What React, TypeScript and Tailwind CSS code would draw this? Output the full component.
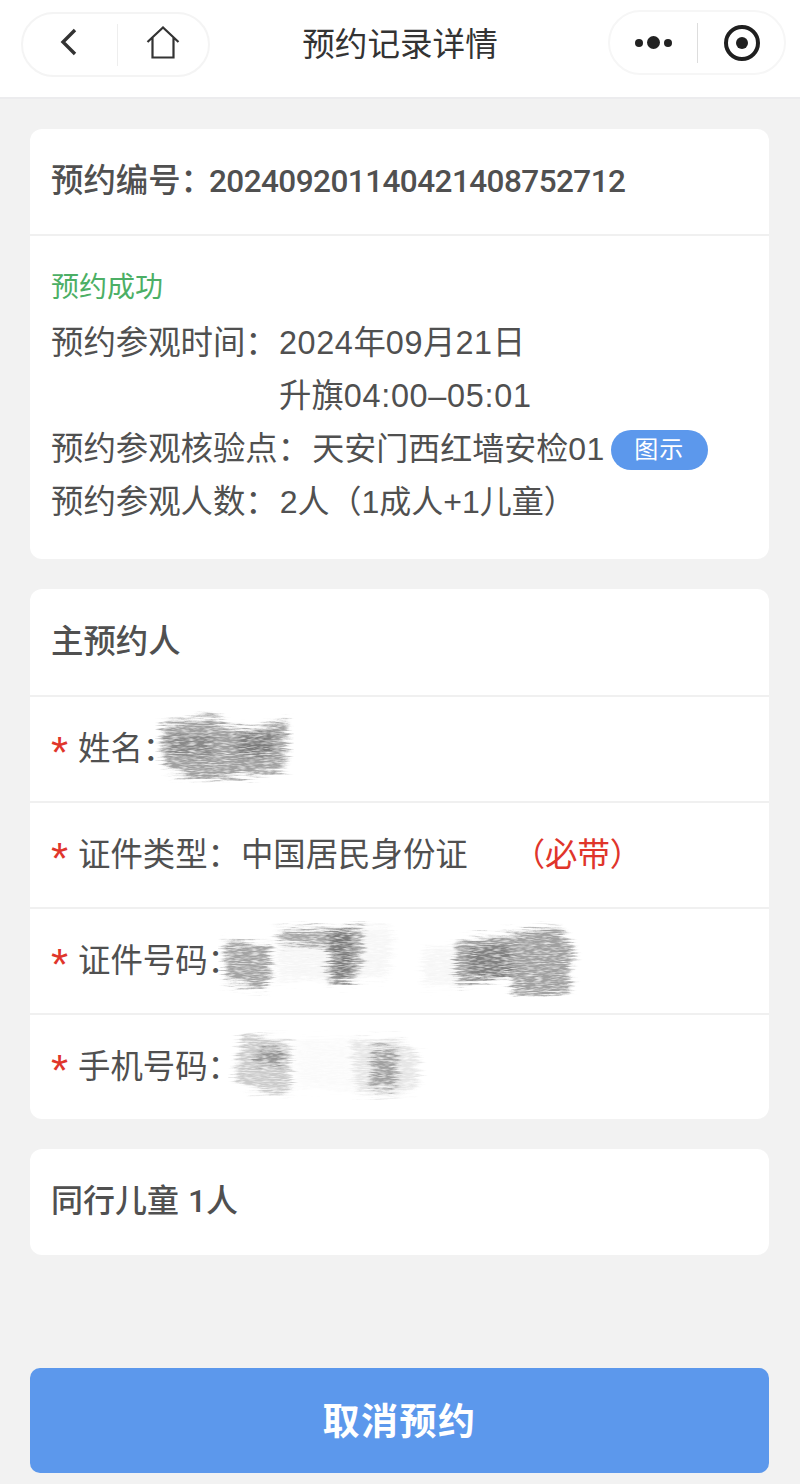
const fontCls = "font-['Liberation_Sans','Noto_Sans_CJK_SC',sans-serif]";

// pencil-like redaction: soft gray shapes with a streaky noise mask
type Patch = { points: string; opacity: number };

const Scribble = ({
  id,
  className,
  width,
  height,
  patches,
}: {
  id: string;
  className: string;
  width: number;
  height: number;
  patches: Patch[];
}) => (
  <svg
    width={width}
    height={height}
    viewBox={`0 0 ${width} ${height}`}
    className={`absolute ${className}`}
  >
    <defs>
      <filter id={id} x="-5%" y="-5%" width="110%" height="110%">
        <feTurbulence
          type="fractalNoise"
          baseFrequency="0.03 0.45"
          numOctaves="4"
          seed="11"
          result="streaks"
        />
        <feGaussianBlur in="SourceGraphic" stdDeviation="2.5" result="soft" />
        <feDisplacementMap
          in="soft"
          in2="streaks"
          scale="22"
          xChannelSelector="R"
          yChannelSelector="A"
          result="rough"
        />
        <feTurbulence
          type="fractalNoise"
          baseFrequency="0.12 0.9"
          numOctaves="2"
          seed="3"
          result="grain"
        />
        <feColorMatrix
          in="grain"
          type="matrix"
          values="0 0 0 0 0  0 0 0 0 0  0 0 0 0 0  1.8 0 0 0 -0.05"
          result="mask"
        />
        <feComposite in="rough" in2="mask" operator="in" />
        <feGaussianBlur stdDeviation="0.4" />
      </filter>
    </defs>
    <g filter={`url(#${id})`} fill="#666666">
      {patches.map((p, i) => (
        <polygon key={i} points={p.points} opacity={p.opacity} />
      ))}
    </g>
  </svg>
);

const Row = ({
  label,
  children,
  last,
}: {
  label: string;
  children?: React.ReactNode;
  last?: boolean;
}) => (
  <div
    className={`relative flex items-center pl-[21px] ${last ? "h-[104px]" : "h-[106px] border-b-2 border-[#f0f0f0]"}`}
  >
    <span className="w-[27px] text-[#e0352b] text-[44px] leading-none mt-[8px]">*</span>
    <span className="whitespace-nowrap">{label}：</span>
    {children}
  </div>
);

const App = () => {
  return (
    <div className={`w-[800px] h-[1484px] bg-[#f2f2f2] text-[#505050] text-[32.4px] overflow-hidden ${fontCls}`}>
      {/* Nav bar */}
      <div className="relative flex items-center justify-center h-[99px] bg-white border-b-2 border-[#ececee]">
        <span className="text-[#333333] text-[32.6px] mb-[6px]">预约记录详情</span>

        <div className="absolute left-[21px] top-[12px] flex items-center w-[189px] h-[65px] rounded-full border-2 border-[#f4f4f4]">
          <div className="flex items-center justify-center w-[94px] h-full">
            <svg width="20" height="28" viewBox="0 0 20 28" fill="none" className="mb-[6px] mr-[2px]">
              <path d="M16 2 L4 14 L16 26" stroke="#333333" strokeWidth="3.4" />
            </svg>
          </div>
          <div className="w-[1px] h-[42px] bg-[#eeeeee]" />
          <div className="flex items-center justify-center flex-1 h-full">
            <svg width="34" height="34" viewBox="0 0 34 34" fill="none" className="mb-[4px]">
              <path
                d="M1.5 16 L17 1.5 L32.5 16 M6.5 11.5 V31.5 H27.5 V11.5"
                stroke="#333333"
                strokeWidth="2.2"
              />
            </svg>
          </div>
        </div>

        <div className="absolute left-[608px] top-[10px] flex items-center w-[178px] h-[65px] rounded-full border-2 border-[#f6f6f6]">
          <div className="flex items-center justify-center gap-[4px] w-[87px] h-full">
            <span className="w-[8px] h-[8px] rounded-full bg-[#222222]" />
            <span className="w-[13px] h-[13px] rounded-full bg-[#222222]" />
            <span className="w-[8px] h-[8px] rounded-full bg-[#222222]" />
          </div>
          <div className="w-[1px] h-[40px] bg-[#dddddd]" />
          <div className="flex items-center justify-center flex-1 h-full pl-[2px]">
            <div className="flex items-center justify-center w-[36px] h-[36px] rounded-full border-[4.5px] border-[#1f1f1f]">
              <span className="w-[12px] h-[12px] rounded-full bg-[#1f1f1f]" />
            </div>
          </div>
        </div>
      </div>

      <div className="flex flex-col gap-[30px] px-[30px] pt-[30px]">
        {/* Booking info */}
        <div className="bg-white rounded-[12px] w-[739px]">
          <div className="flex items-center h-[107px] pl-[21px] border-b-2 border-[#f0f0f0] font-medium">
            <span>预约编号：</span>
            <span className="font-['Roboto'] text-[31.5px] tracking-[-0.55px] ml-[-4px]">202409201140421408752712</span>
          </div>
          <div className="pl-[21px] pt-[26px] pb-[30px]">
            <div className="h-[52px] flex items-center text-[28px] text-[#4caf65]">预约成功</div>
            <div className="mt-[3px] flex flex-col leading-[53px]">
              <div className="flex">
                <span className="w-[228px] shrink-0">预约参观时间：</span>
                <div>
                  <div className="flex">
                    <span className="tracking-[0.6px]">2024</span>年<span className="tracking-[0.6px]">09</span>月<span className="tracking-[0.6px]">21</span>日
                  </div>
                  <div>
                    升旗<span className="tracking-[0.7px]">04:00–05:01</span>
                  </div>
                </div>
              </div>
              <div className="flex items-center whitespace-nowrap">
                <span>预约参观核验点：</span>
                <span className="ml-[2px] text-[32px]">天安门西红墙安检<span className="tracking-[0.5px]">01</span></span>
                <span className="ml-[6px] flex items-center justify-center w-[97px] h-[40px] rounded-full bg-[#5c98ec] text-white text-[24px] tracking-[1px]">
                  图示
                </span>
              </div>
              <div className="flex whitespace-nowrap">
                <span>预约参观人数：</span>
                <span className="ml-[2px] text-[32px]">2人（1成人+1儿童）</span>
              </div>
            </div>
          </div>
        </div>

        {/* Main person */}
        <div className="bg-white rounded-[12px] w-[739px]">
          <div className="flex items-center h-[108px] pl-[21px] border-b-2 border-[#f0f0f0] font-medium">
            主预约人
          </div>
          <Row label="姓名">
            <Scribble
              id="s1"
              className="left-[125px] top-[12px]"
              width={140}
              height={78}
              patches={[
                { points: "8,16 62,6 70,20 90,22 132,12 132,30 130,58 90,68 40,70 12,62 6,40", opacity: 0.62 },
                { points: "14,28 56,26 56,46 16,48", opacity: 0.4 },
                { points: "82,24 120,26 116,46 86,48", opacity: 0.6 },
              ]}
            />
          </Row>
          <Row label="证件类型">
            <span className="ml-[1px]">中国居民身份证</span>
            <span className="ml-[45px] text-[#e0352b]">（必带）</span>
          </Row>
          <Row label="证件号码">
            <Scribble
              id="s2"
              className="left-[188px] top-[10px]"
              width={365}
              height={78}
              patches={[
                { points: "6,24 52,26 50,70 8,64", opacity: 0.6 },
                { points: "60,10 170,6 174,22 168,58 60,62", opacity: 0.06 },
                { points: "60,12 146,8 140,60 122,60 118,30 64,24", opacity: 0.55 },
                { points: "112,14 134,12 132,62 110,62", opacity: 0.7 },
                { points: "205,30 235,28 235,68 205,68", opacity: 0.06 },
                { points: "238,24 310,12 342,8 354,30 352,74 296,78 292,56 238,64", opacity: 0.62 },
                { points: "252,28 292,26 292,58 252,62", opacity: 0.55 },
              ]}
            />
          </Row>
          <Row label="手机号码" last>
            <Scribble
              id="s3"
              className="left-[198px] top-[11px]"
              width={200}
              height={78}
              patches={[
                { points: "16,8 62,16 62,66 22,64 6,52", opacity: 0.35 },
                { points: "30,22 54,22 54,38 30,38", opacity: 0.55 },
                { points: "70,14 120,14 125,62 70,62", opacity: 0.03 },
                { points: "124,14 172,14 190,30 190,58 168,70 128,66", opacity: 0.16 },
                { points: "144,22 168,22 168,62 144,62", opacity: 0.55 },
              ]}
            />
          </Row>
        </div>

        {/* Children */}
        <div className="flex items-center h-[106px] pl-[21px] pb-[2px] bg-white rounded-[12px] w-[739px] text-[32px] font-medium">
          同行儿童&nbsp;<span className="font-['Roboto','Noto_Sans_CJK_SC']">1人</span>
        </div>
      </div>

      {/* Cancel button */}
      <div className="px-[30px] mt-[113px]">
        <button
          type="button"
          className="flex items-center justify-center w-[739px] h-[105px] pt-[4px] rounded-[10px] bg-[#5c98ec] text-white text-[37px] font-bold tracking-[1.5px]"
        >
          取消预约
        </button>
      </div>
    </div>
  );
};

export default App;
